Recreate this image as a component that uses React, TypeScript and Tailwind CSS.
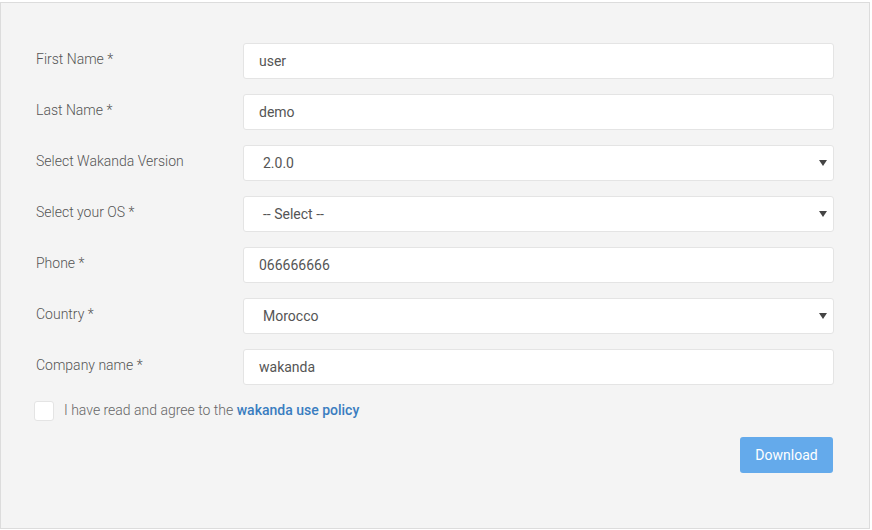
import React from 'react';

type Field = {
  label: string;
  value: string;
  select?: boolean;
};

const fields: Field[] = [
  { label: 'First Name *', value: 'user' },
  { label: 'Last Name *', value: 'demo' },
  { label: 'Select Wakanda Version', value: '2.0.0', select: true },
  { label: 'Select your OS *', value: '-- Select --', select: true },
  { label: 'Phone *', value: '066666666' },
  { label: 'Country *', value: 'Morocco', select: true },
  { label: 'Company name *', value: 'wakanda' },
];

function Caret() {
  return (
    <svg width="8" height="6" viewBox="0 0 8 6" className="text-[#444]">
      <path d="M0 0h8L4 6z" fill="currentColor" />
    </svg>
  );
}

function FormRow({ field }: { field: Field }) {
  return (
    <div className="flex items-start">
      <label className="w-[207px] shrink-0 pt-[8px] text-[14px] font-light leading-[16px] text-[#555]">
        {field.label}
      </label>
      <div
        className={`flex h-[36px] w-[591px] items-center justify-between rounded-[3px] border border-[#e4e4e4] bg-white text-[14px] text-[#555] ${
          field.select ? 'pl-[19px] pr-[6px]' : 'pl-[15px]'
        }`}
      >
        <span>{field.value}</span>
        {field.select && <Caret />}
      </div>
    </div>
  );
}

export default function App() {
  return (
    <div className="pt-[2px]" style={{ fontFamily: 'Roboto, "Liberation Sans", sans-serif' }}>
      <div className="h-[527px] w-[870px] border border-[#dcdcdc] bg-[#f4f4f4] pl-[35px] pt-[40px]">
        <div className="flex flex-col gap-[15px]">
          {fields.map((f) => (
            <FormRow key={f.label} field={f} />
          ))}
        </div>
        <div className="mt-[15px] flex items-center">
          <div className="h-[20px] w-[20px] -ml-[2px] rounded-[3px] border border-[#e4e4e4] bg-white" />
          <span className="ml-[10px] text-[14px] font-light text-[#666]">
            I have read and agree to the{' '}
            <a className="font-medium text-[#3a7dc0]">wakanda use policy</a>
          </span>
        </div>
        <div className="mt-[16px] flex w-[797px] justify-end">
          <button className="h-[36px] w-[93px] rounded-[3px] bg-[#64aaeb] text-[14px] text-white">
            Download
          </button>
        </div>
      </div>
    </div>
  );
}
